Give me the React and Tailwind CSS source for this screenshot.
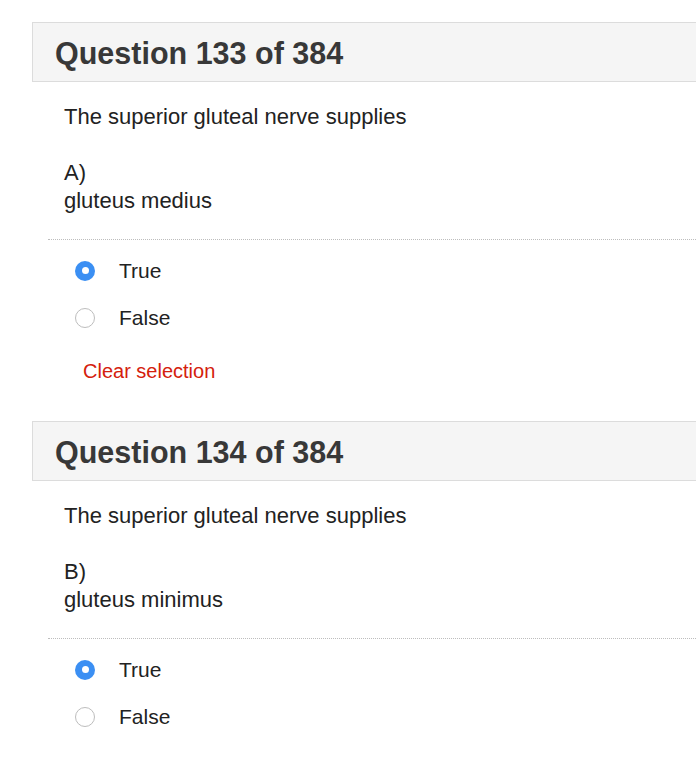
import { useState } from "react";

const questions = [
  { num: 133, text: "The superior gluteal nerve supplies", letter: "A)", option: "gluteus medius" },
  { num: 134, text: "The superior gluteal nerve supplies", letter: "B)", option: "gluteus minimus" },
];

function Radio({ checked }) {
  return checked ? (
    <span className="flex h-[20px] w-[20px] items-center justify-center rounded-full bg-[#3b8ff3]">
      <span className="h-[7px] w-[7px] rounded-full bg-white" />
    </span>
  ) : (
    <span className="h-[20px] w-[20px] rounded-full border border-[#bdbdbd] bg-white" />
  );
}

function Question({ q }) {
  const [answer, setAnswer] = useState("true");
  return (
    <section className="mb-[38px]">
      <div className="ml-8 flex h-[60px] items-center border-y border-l border-[#dcdcdc] bg-[#f5f5f5] pl-[22px] pt-[3px]">
        <h2 className="text-[30.5px] font-bold text-[#383838]">Question {q.num} of 384</h2>
      </div>
      <p className="ml-16 mt-[23px] text-[22px] leading-[24px] text-[#222]">{q.text}</p>
      <div className="ml-16 mt-[30px] text-[22px] leading-[28px] text-[#222]">
        <div>{q.letter}</div>
        <div>{q.option}</div>
      </div>
      <div className="ml-12 mt-[24px] border-t border-dotted border-[#bdbdbd]" />
      <div className="mt-[7px] pl-[75px]">
        {["true", "false"].map((v) => (
          <label key={v} className="flex h-[47px] cursor-pointer items-center" onClick={() => setAnswer(v)}>
            <Radio checked={answer === v} />
            <span className="ml-[24px] text-[21px] text-[#222]">{v === "true" ? "True" : "False"}</span>
          </label>
        ))}
      </div>
      <button className="ml-[83px] mt-[18px] block text-[20px] leading-[24px] text-[#d4200c]" onClick={() => setAnswer(null)}>
        Clear selection
      </button>
    </section>
  );
}

export default function App() {
  return (
    <div className="min-h-screen overflow-hidden bg-white pt-[22px] font-['Liberation_Sans',Arial,sans-serif]">
      {questions.map((q) => (
        <Question key={q.num} q={q} />
      ))}
    </div>
  );
}
